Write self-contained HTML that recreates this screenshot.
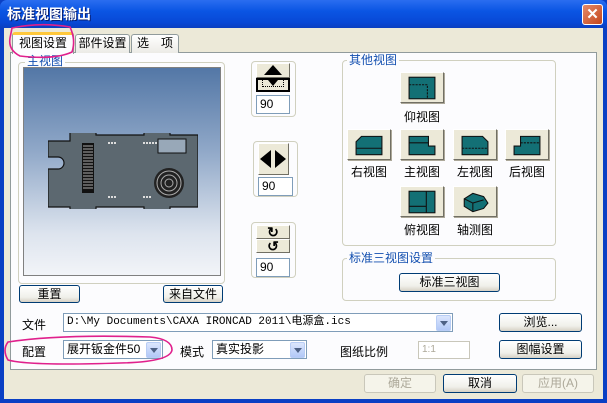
<!DOCTYPE html>
<html><head><meta charset="utf-8"><style>
*{box-sizing:border-box;margin:0;padding:0}
body{width:607px;height:403px;overflow:hidden;background:#0a3fc4;font-family:"Liberation Sans","Noto Sans CJK SC","WenQuanYi Zen Hei",sans-serif;font-size:12px;color:#000;position:relative}
.a{position:absolute}
#title{left:0;top:0;width:607px;height:28px;background:linear-gradient(#2a6df0,#0a55e3 40%,#0848d6 80%,#0a3fc0);border-radius:7px 7px 0 0}
#title span{position:absolute;left:7px;top:4px;color:#fff;font-weight:bold;font-size:14px;text-shadow:1px 1px #0a1e6e}
#close{left:582px;top:4px;width:21px;height:21px;border:1px solid #fff;border-radius:3px;background:linear-gradient(135deg,#e58a6a,#c4461c);color:#fff;font-weight:bold;text-align:center;line-height:19px;font-size:15px}
#body{left:4px;top:28px;width:599px;height:371px;background:#ece9d8}
#panel{left:10px;top:52px;width:587px;height:318px;background:#fcfcfe;border:1px solid #919b9c}
.tab{top:34px;height:19px;border:1px solid #919b9c;border-bottom:none;background:linear-gradient(#fff,#ecebe6);text-align:center;line-height:17px;border-radius:3px 3px 0 0}
.grp{border:1px solid #d0d0bf;border-radius:4px}
.gl{background:#fcfcfe;color:#1450b0;padding:0 2px;line-height:12px}
.btn{border:1px solid #003c74;border-radius:3px;background:linear-gradient(#fff,#f0f0ea 70%,#d6d0c4);text-align:center;line-height:16px}
.btn.dis{border-color:#c9c7ba;color:#aca899;background:#f5f4ea}
.in{border:1px solid #7f9db9;background:#fff;padding-left:3px;line-height:16px}
.vb{width:44px;height:31px;background:#ece9d8;border:1px solid;border-color:#fff #716f64 #716f64 #fff;box-shadow:1px 1px 0 #aca899}
.vb svg{position:absolute;left:7px;top:3px}
.lbl{text-align:center;width:56px}
.dd{position:absolute;right:1px;top:1px;width:15px;height:16px;background:linear-gradient(#dbe6fd,#b2c8f7);border-radius:2px;border:1px solid #b8cdf5}
.dd:after{content:"";position:absolute;left:3px;top:5px;border:4px solid transparent;border-top:5px solid #4d6185;border-bottom:0}
.sb{background:#ece9d8;border:1px solid;border-color:#fff #716f64 #716f64 #fff}
</style></head><body>
<div class="a" id="title"><span>标准视图输出</span></div>
<div class="a" id="close">✕</div>
<div class="a" id="body"></div>
<div class="a" id="panel"></div>
<div class="a tab" style="left:75px;width:55px">部件设置</div>
<div class="a tab" style="left:131px;width:48px">选　项</div>
<div class="a tab" style="left:12px;width:62px;top:32px;height:22px;background:#fcfcfe;border-top:3px solid #ffc83c">视图设置</div>

<div class="a grp" style="left:18px;top:62px;width:207px;height:222px"></div>
<div class="a gl" style="left:25px;top:55px">主视图</div>
<div class="a" style="left:23px;top:67px;width:198px;height:209px;border:1px solid #808080;background:linear-gradient(#5377a6,#90a8c8 40%,#dde4ee 80%,#f2f4f8)"></div>
<svg class="a" style="left:48px;top:133px" width="150" height="76" viewBox="0 0 150 76">
<path d="M22 2h26v4h48v-4h26v4h28v72h-28v4h-26v-4h-48v4h-26v-4h-22v-38h10a6 6 0 0 0 0-12h-10v-16h22z" fill="#5c6870" stroke="#111" stroke-width="1.2" transform="translate(0,-4)"/>
<g fill="#111"><rect x="34" y="10" width="12" height="50"/></g>
<g stroke="#aaa" stroke-width="1">
<path d="M35 13h10M35 16h10M35 19h10M35 22h10M35 25h10M35 28h10M35 31h10M35 34h10M35 37h10M35 40h10M35 43h10M35 46h10M35 49h10M35 52h10M35 55h10"/></g>
<rect x="110" y="6" width="28" height="14" fill="#98a8b8" stroke="#111"/>
<circle cx="121" cy="50" r="15" fill="#222"/><circle cx="121" cy="50" r="12" fill="none" stroke="#aaa"/><circle cx="121" cy="50" r="8" fill="none" stroke="#aaa"/><circle cx="121" cy="50" r="4" fill="none" stroke="#aaa"/>
<path d="M60 10h8M95 10h14M60 64h8M95 64h8" stroke="#ddd" stroke-width="2" stroke-dasharray="2 1"/>
</svg>
<div class="a btn" style="left:19px;top:285px;width:61px;height:18px">重置</div>
<div class="a btn" style="left:163px;top:285px;width:60px;height:18px">来自文件</div>

<div class="a grp" style="left:251px;top:61px;width:45px;height:56px"></div>
<div class="a sb" style="left:256px;top:63px;width:34px;height:15px"><div style="margin:1px auto;width:0;border:9px solid transparent;border-bottom:10px solid #000;border-top:0"></div></div>
<div class="a sb" style="left:256px;top:78px;width:34px;height:14px;border:2px solid #000;background:#ece9d8"><div style="margin:0 auto;width:22px;height:7px;border:1px dotted #000;border-top:0;position:relative"><div style="position:absolute;left:5px;top:0;border:5px solid transparent;border-top:6px solid #000;border-bottom:0"></div></div></div>
<div class="a in" style="left:256px;top:95px;width:34px;height:19px">90</div>

<div class="a grp" style="left:253px;top:141px;width:45px;height:56px"></div>
<div class="a sb" style="left:258px;top:143px;width:31px;height:32px"><div style="position:absolute;left:1px;top:6px;border:9px solid transparent;border-right:11px solid #000;border-left:0"></div><div style="position:absolute;left:16px;top:6px;border:9px solid transparent;border-left:11px solid #000;border-right:0"></div></div>
<div class="a in" style="left:258px;top:177px;width:35px;height:19px">90</div>

<div class="a grp" style="left:251px;top:222px;width:45px;height:56px"></div>
<div class="a sb" style="left:256px;top:225px;width:34px;height:14px;text-align:center;font-weight:bold;line-height:12px;font-size:14px">↻</div>
<div class="a sb" style="left:256px;top:239px;width:34px;height:14px;text-align:center;font-weight:bold;line-height:12px;font-size:14px">↺</div>
<div class="a in" style="left:256px;top:258px;width:34px;height:19px">90</div>

<div class="a grp" style="left:342px;top:60px;width:214px;height:186px"></div>
<div class="a gl" style="left:347px;top:54px">其他视图</div>
<div class="a vb" style="left:400px;top:72px"><svg width="28" height="24" viewBox="0 0 26 22"><rect x="1" y="1" width="24" height="20" fill="#137075" stroke="#111"/><path d="M1 8h17v13" fill="none" stroke="#111" stroke-dasharray="2 1"/></svg></div>
<div class="a lbl" style="left:394px;top:108px">仰视图</div>
<div class="a vb" style="left:347px;top:129px"><svg width="28" height="24" viewBox="0 0 26 22"><path d="M6 3h19v17h-24v-12z" fill="#137075" stroke="#111"/><path d="M1 14h24" stroke="#111"/></svg></div>
<div class="a vb" style="left:400px;top:129px"><svg width="28" height="24" viewBox="0 0 26 22"><path d="M1 3h18v9h6v8h-24z" fill="#137075" stroke="#111"/><path d="M1 9h18" stroke="#111"/></svg></div>
<div class="a vb" style="left:453px;top:129px"><svg width="28" height="24" viewBox="0 0 26 22"><path d="M1 3h19l5 5v12h-24z" fill="#137075" stroke="#111"/><path d="M1 14h24" stroke="#111" stroke-dasharray="2 1"/></svg></div>
<div class="a vb" style="left:505px;top:129px"><svg width="28" height="24" viewBox="0 0 26 22"><path d="M7 3h18v17h-24v-8h6z" fill="#137075" stroke="#111"/><path d="M7 9h18" stroke="#111" stroke-dasharray="2 1"/></svg></div>
<div class="a lbl" style="left:341px;top:163px">右视图</div>
<div class="a lbl" style="left:394px;top:163px">主视图</div>
<div class="a lbl" style="left:447px;top:163px">左视图</div>
<div class="a lbl" style="left:499px;top:163px">后视图</div>
<div class="a vb" style="left:400px;top:186px"><svg width="28" height="24" viewBox="0 0 26 22"><rect x="1" y="1" width="24" height="20" fill="#137075" stroke="#111"/><path d="M17 1v20M1 15h16" stroke="#111"/></svg></div>
<div class="a vb" style="left:453px;top:186px"><svg width="28" height="24" viewBox="0 0 26 22"><path d="M3 8l8-5 10 3 4 6-4 5-10 3-8-5z" fill="#137075" stroke="#111"/><path d="M3 8l8 4 10-3M11 12v7" fill="none" stroke="#111"/></svg></div>
<div class="a lbl" style="left:394px;top:221px">俯视图</div>
<div class="a lbl" style="left:447px;top:221px">轴测图</div>

<div class="a grp" style="left:342px;top:258px;width:214px;height:43px"></div>
<div class="a gl" style="left:347px;top:252px">标准三视图设置</div>
<div class="a btn" style="left:399px;top:273px;width:101px;height:19px">标准三视图</div>

<div class="a" style="left:22px;top:316px">文件</div>
<div class="a in" style="left:63px;top:313px;width:390px;height:19px;font-family:'Liberation Mono','Noto Sans CJK SC',monospace;font-size:11px">D:\My Documents\CAXA IRONCAD 2011\电源盒.ics<div class="dd"></div></div>
<div class="a btn" style="left:499px;top:313px;width:83px;height:19px">浏览...</div>

<div class="a" style="left:22px;top:343px">配置</div>
<div class="a in" style="left:63px;top:340px;width:100px;height:19px">展开钣金件50<div class="dd"></div></div>
<div class="a" style="left:180px;top:343px">模式</div>
<div class="a in" style="left:212px;top:340px;width:95px;height:19px">真实投影<div class="dd"></div></div>
<div class="a" style="left:340px;top:343px">图纸比例</div>
<div class="a in" style="left:418px;top:341px;width:52px;height:18px;border-color:#c9c7ba;color:#aca899;font-size:10px">1:1</div>
<div class="a btn" style="left:499px;top:340px;width:83px;height:19px">图幅设置</div>

<div class="a btn dis" style="left:364px;top:374px;width:72px;height:19px">确定</div>
<div class="a btn" style="left:443px;top:374px;width:74px;height:19px">取消</div>
<div class="a btn dis" style="left:522px;top:374px;width:72px;height:19px">应用(A)</div>

<svg class="a" style="left:0;top:0" width="607" height="403">
<path d="M12 28 Q40 22 70 27 Q76 40 72 52 Q55 60 20 56 Q8 50 10 38 Z" fill="none" stroke="#e0208c" stroke-width="1.6"/>
<path d="M8 342 Q60 334 150 337 Q172 339 172 350 Q170 362 120 363 Q30 366 8 360 Q2 350 8 342z" fill="none" stroke="#e0208c" stroke-width="1.6"/>
</svg>
</body></html>
